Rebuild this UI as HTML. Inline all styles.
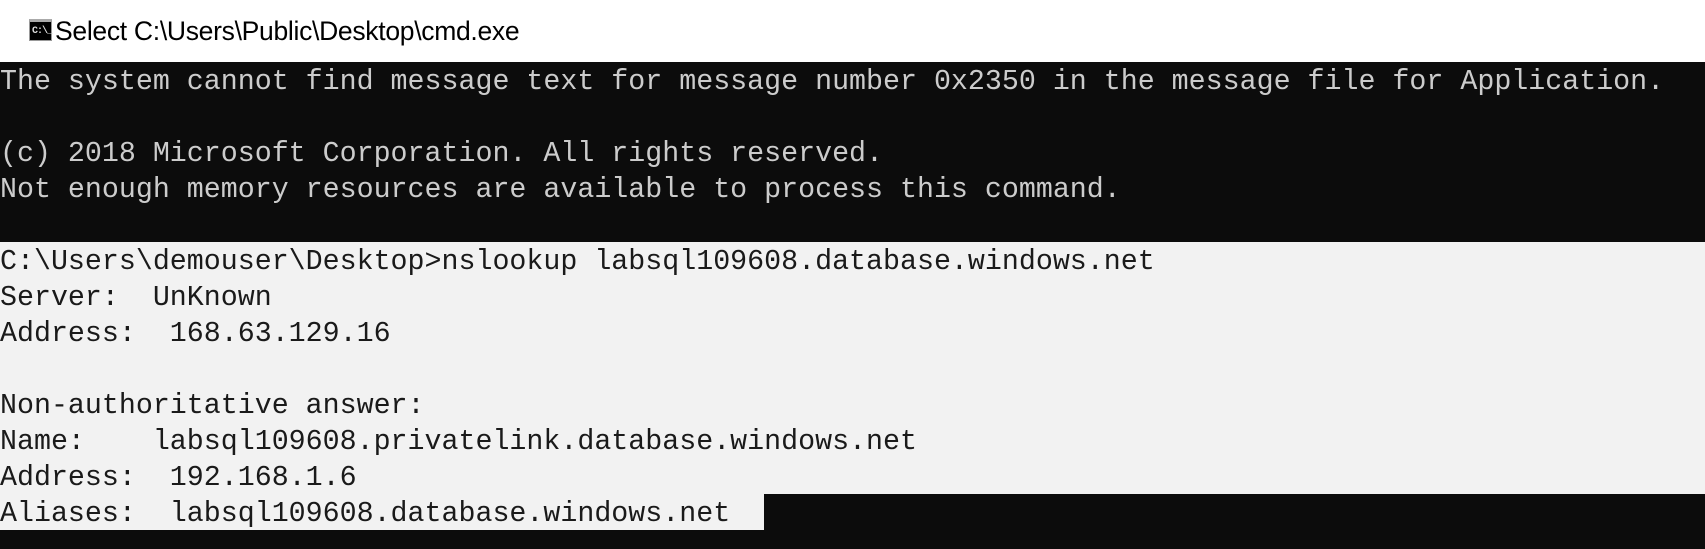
<!DOCTYPE html>
<html><head><style>
html,body{margin:0;padding:0;width:1705px;height:549px;overflow:hidden;background:#fff;}
.title{position:absolute;left:0;top:0;width:1705px;height:62px;background:#fff;}
.icon{position:absolute;left:29px;top:19px;width:23px;height:22px;background:#000;border:1px solid #999;border-top:3px solid #aaa;box-sizing:border-box;}
.icon span{position:absolute;left:2px;top:4px;font:bold 10px "Liberation Mono",monospace;color:#ddd;letter-spacing:-1px;}
.ttl{position:absolute;left:55px;top:16px;font:26.5px "Liberation Sans",sans-serif;color:#000;letter-spacing:-0.3px;}
.con{position:absolute;left:0;top:62px;width:1705px;height:487px;background:#0c0c0c;}
.ln{position:absolute;left:0;height:36px;box-sizing:border-box;padding-top:4px;line-height:32px;font:28.3px "Liberation Mono",monospace;color:#cccccc;white-space:pre;width:1705px;overflow:hidden;}
.sel{background:#f2f2f2;color:#1a1a1a;}
</style></head><body>
<div class="title"><div class="icon"><span>C:\_</span></div><div class="ttl">Select C:\Users\Public\Desktop\cmd.exe</div></div>
<div class="con">
<div class="ln" style="top:0">The system cannot find message text for message number 0x2350 in the message file for Application.</div>
<div class="ln" style="top:72px">(c) 2018 Microsoft Corporation. All rights reserved.</div>
<div class="ln" style="top:108px">Not enough memory resources are available to process this command.</div>
<div class="ln sel" style="top:180px">C:\Users\demouser\Desktop>nslookup labsql109608.database.windows.net</div>
<div class="ln sel" style="top:216px">Server:  UnKnown</div>
<div class="ln sel" style="top:252px">Address:  168.63.129.16</div>
<div class="ln sel" style="top:288px"> </div>
<div class="ln sel" style="top:324px">Non-authoritative answer:</div>
<div class="ln sel" style="top:360px">Name:    labsql109608.privatelink.database.windows.net</div>
<div class="ln sel" style="top:396px">Address:  192.168.1.6</div>
<div class="ln sel" style="top:432px;width:764px">Aliases:  labsql109608.database.windows.net</div>
</div>
</body></html>
